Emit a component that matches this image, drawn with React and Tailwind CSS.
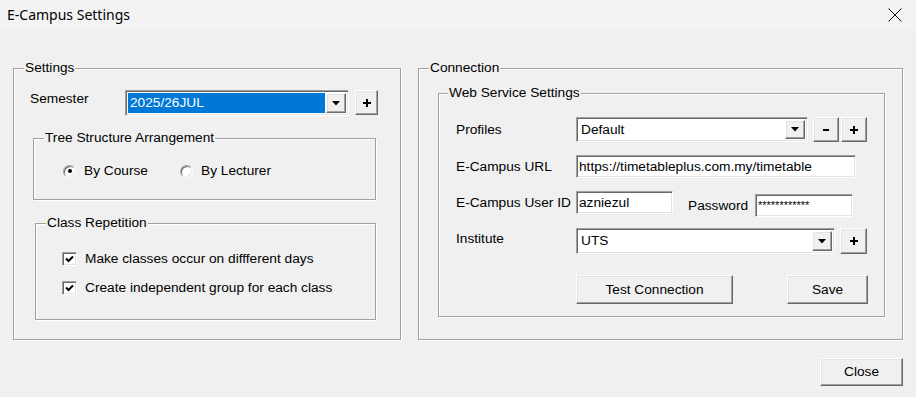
import React from "react";

const sunken =
  "border border-t-[#a0a0a0] border-l-[#a0a0a0] border-b-white border-r-white shadow-[inset_1px_1px_0_#696969,inset_-1px_-1px_0_#e3e3e3]";
const raised =
  "border border-t-white border-l-white border-b-[#696969] border-r-[#696969] shadow-[inset_-1px_-1px_0_#a0a0a0,inset_1px_1px_0_#e3e3e3] bg-[#f0f0f0]";

function GroupBox({ label, labelLeft, className, children }) {
  return (
    <div
      className={
        "relative border border-[#a0a0a0] shadow-[1px_1px_0_#fff,inset_1px_1px_0_#fff] flex flex-col items-start " +
        className
      }
    >
      <span
        className="absolute top-[-9px] bg-[#f0f0f0] px-[1px] leading-[16px] whitespace-nowrap"
        style={{ left: labelLeft }}
      >
        {label}
      </span>
      {children}
    </div>
  );
}

function DropArrow() {
  return (
    <svg width="8" height="5" viewBox="0 0 8 5">
      <path d="M0 0H8L4 4.5Z" fill="#000" />
    </svg>
  );
}

function Combo({ value, selected, className }) {
  return (
    <div className={"flex items-stretch bg-white " + sunken + " " + className}>
      <div className="flex-1 flex items-center p-[2px] pr-[1px] min-w-0">
        <div
          className={
            "h-full flex-1 flex items-center pl-[2px] leading-[16px] whitespace-nowrap " +
            (selected ? "bg-[#0078d7] text-white" : "")
          }
        >
          {value}
        </div>
      </div>
      <div className={"w-[20px] my-[2px] mr-[2px] flex items-center justify-center " + raised}>
        <DropArrow />
      </div>
    </div>
  );
}

function Btn({ children, className }) {
  return (
    <div
      className={
        "flex items-center justify-center leading-[16px] whitespace-nowrap " +
        raised +
        " " +
        className
      }
    >
      {children}
    </div>
  );
}

function PlusMinus({ plus }) {
  return (
    <svg width="8" height="8" viewBox="0 0 8 8">
      <rect x="0" y="3" width="8" height="2" fill="#000" />
      {plus && <rect x="3" y="0" width="2" height="8" fill="#000" />}
    </svg>
  );
}

function TextBox({ value, className }) {
  return (
    <div
      className={
        "flex items-center bg-white pl-[2px] leading-[16px] whitespace-nowrap overflow-hidden " +
        sunken +
        " " +
        className
      }
    >
      {value}
    </div>
  );
}

function Radio({ checked, label, className }) {
  return (
    <div className={"flex items-center gap-[8px] " + className}>
      <span className="w-[13px] h-[13px] rounded-full bg-white border border-t-[#a0a0a0] border-l-[#a0a0a0] border-b-white border-r-white shadow-[inset_1px_1px_0_#696969,inset_-1px_-1px_0_#e3e3e3] flex items-center justify-center">
        {checked && <span className="w-[4px] h-[4px] rounded-full bg-black" />}
      </span>
      <span className="leading-[16px]">{label}</span>
    </div>
  );
}

function Check({ label, className }) {
  return (
    <div className={"flex items-center gap-[8px] " + className}>
      <span className={"w-[15px] h-[14px] bg-white flex items-center justify-center " + sunken}>
        <svg width="9" height="8" viewBox="0 0 9 8">
          <path d="M1 3.5L3.5 6L8 1.5" stroke="#000" strokeWidth="2" fill="none" />
        </svg>
      </span>
      <span className="leading-[16px]">{label}</span>
    </div>
  );
}

export default function App() {
  return (
    <div
      className="w-[916px] h-[397px] bg-[#f0f0f0] text-black text-[13.7px] flex flex-col overflow-hidden"
      style={{ fontFamily: "'Liberation Sans', Arial, sans-serif" }}
    >
      {/* Title bar */}
      <div className="h-[30px] bg-[#f3f3f3] flex items-center justify-between pl-[7px] pr-[14px] shrink-0">
        <span
          className="text-[14px] leading-[18px]"
          style={{ fontFamily: "'Noto Sans', 'Open Sans', sans-serif" }}
        >
          E-Campus Settings
        </span>
        <svg width="14" height="14" viewBox="0 0 14 14">
          <path d="M0.5 0.5L13.5 13.5M13.5 0.5L0.5 13.5" stroke="#000" strokeWidth="1" />
        </svg>
      </div>

      {/* Client */}
      <div className="flex flex-col">
        <div className="flex gap-[17px] ml-[13px] mt-[38px]">
          {/* Settings */}
          <GroupBox label="Settings" labelLeft="10px" className="w-[388px] h-[272px]">
            <div className="flex items-start mt-[21px] ml-[16px]">
              <span className="w-[95px] leading-[16px] mt-[1px]">Semester</span>
              <Combo value="2025/26JUL" selected className="w-[224px] h-[26px]" />
              <Btn className="w-[23px] h-[25px] ml-[6px]">
                <PlusMinus plus />
              </Btn>
            </div>

            <GroupBox
              label="Tree Structure Arrangement"
              labelLeft="10px"
              className="w-[343px] h-[62px] mt-[22px] ml-[19px]"
            >
              <div className="flex items-center mt-[24px] ml-[29px]">
                <Radio checked label="By Course" className="w-[117px]" />
                <Radio label="By Lecturer" />
              </div>
            </GroupBox>

            <GroupBox
              label="Class Repetition"
              labelLeft="10px"
              className="w-[341px] h-[97px] mt-[23px] ml-[21px]"
            >
              <Check label="Make classes occur on diffferent days" className="mt-[27px] ml-[26px]" />
              <Check label="Create independent group for each class" className="mt-[13px] ml-[26px]" />
            </GroupBox>
          </GroupBox>

          {/* Connection */}
          <GroupBox label="Connection" labelLeft="10px" className="w-[485px] h-[272px]">
            <GroupBox
              label="Web Service Settings"
              labelLeft="9px"
              className="w-[447px] h-[224px] mt-[24px] ml-[19px]"
            >
              <div className="flex items-center mt-[23px] ml-[17px]">
                <span className="w-[120px] leading-[16px]">Profiles</span>
                <Combo value="Default" className="w-[232px] h-[25px]" />
                <Btn className="w-[26px] h-[25px] ml-[5px]">
                  <svg width="6" height="2" viewBox="0 0 6 2">
                    <rect width="6" height="2" fill="#000" />
                  </svg>
                </Btn>
                <Btn className="w-[26px] h-[25px] ml-[2px]">
                  <PlusMinus plus />
                </Btn>
              </div>

              <div className="flex items-center mt-[13px] ml-[17px]">
                <span className="w-[120px] leading-[16px]">E-Campus URL</span>
                <TextBox value="https://timetableplus.com.my/timetable" className="w-[280px] h-[23px]" />
              </div>

              <div className="flex items-start mt-[13px] ml-[17px]">
                <div className="flex items-center">
                  <span className="w-[120px] leading-[16px] whitespace-nowrap">E-Campus User ID</span>
                  <TextBox value="azniezul" className="w-[97px] h-[23px]" />
                </div>
                <div className="flex items-center mt-[3px] ml-[15px]">
                  <span className="w-[67px] leading-[16px]">Password</span>
                  <TextBox value="************" className="w-[98px] h-[23px] text-[11px] items-start pt-[2px]" />
                </div>
              </div>

              <div className="flex items-center mt-[11px] ml-[17px]">
                <span className="w-[120px] leading-[16px] mb-[4px]">Institute</span>
                <Combo value="UTS" className="w-[259px] h-[26px]" />
                <Btn className="w-[27px] h-[26px] ml-[5px]">
                  <PlusMinus plus />
                </Btn>
              </div>

              <div className="flex items-center mt-[21px] ml-[137px]">
                <Btn className="w-[157px] h-[29px]">Test Connection</Btn>
                <Btn className="w-[81px] h-[29px] ml-[54px]">Save</Btn>
              </div>
            </GroupBox>
          </GroupBox>
        </div>

        <div className="flex justify-end pr-[13px] mt-[18px]">
          <Btn className="w-[83px] h-[28px]">Close</Btn>
        </div>
      </div>
    </div>
  );
}
